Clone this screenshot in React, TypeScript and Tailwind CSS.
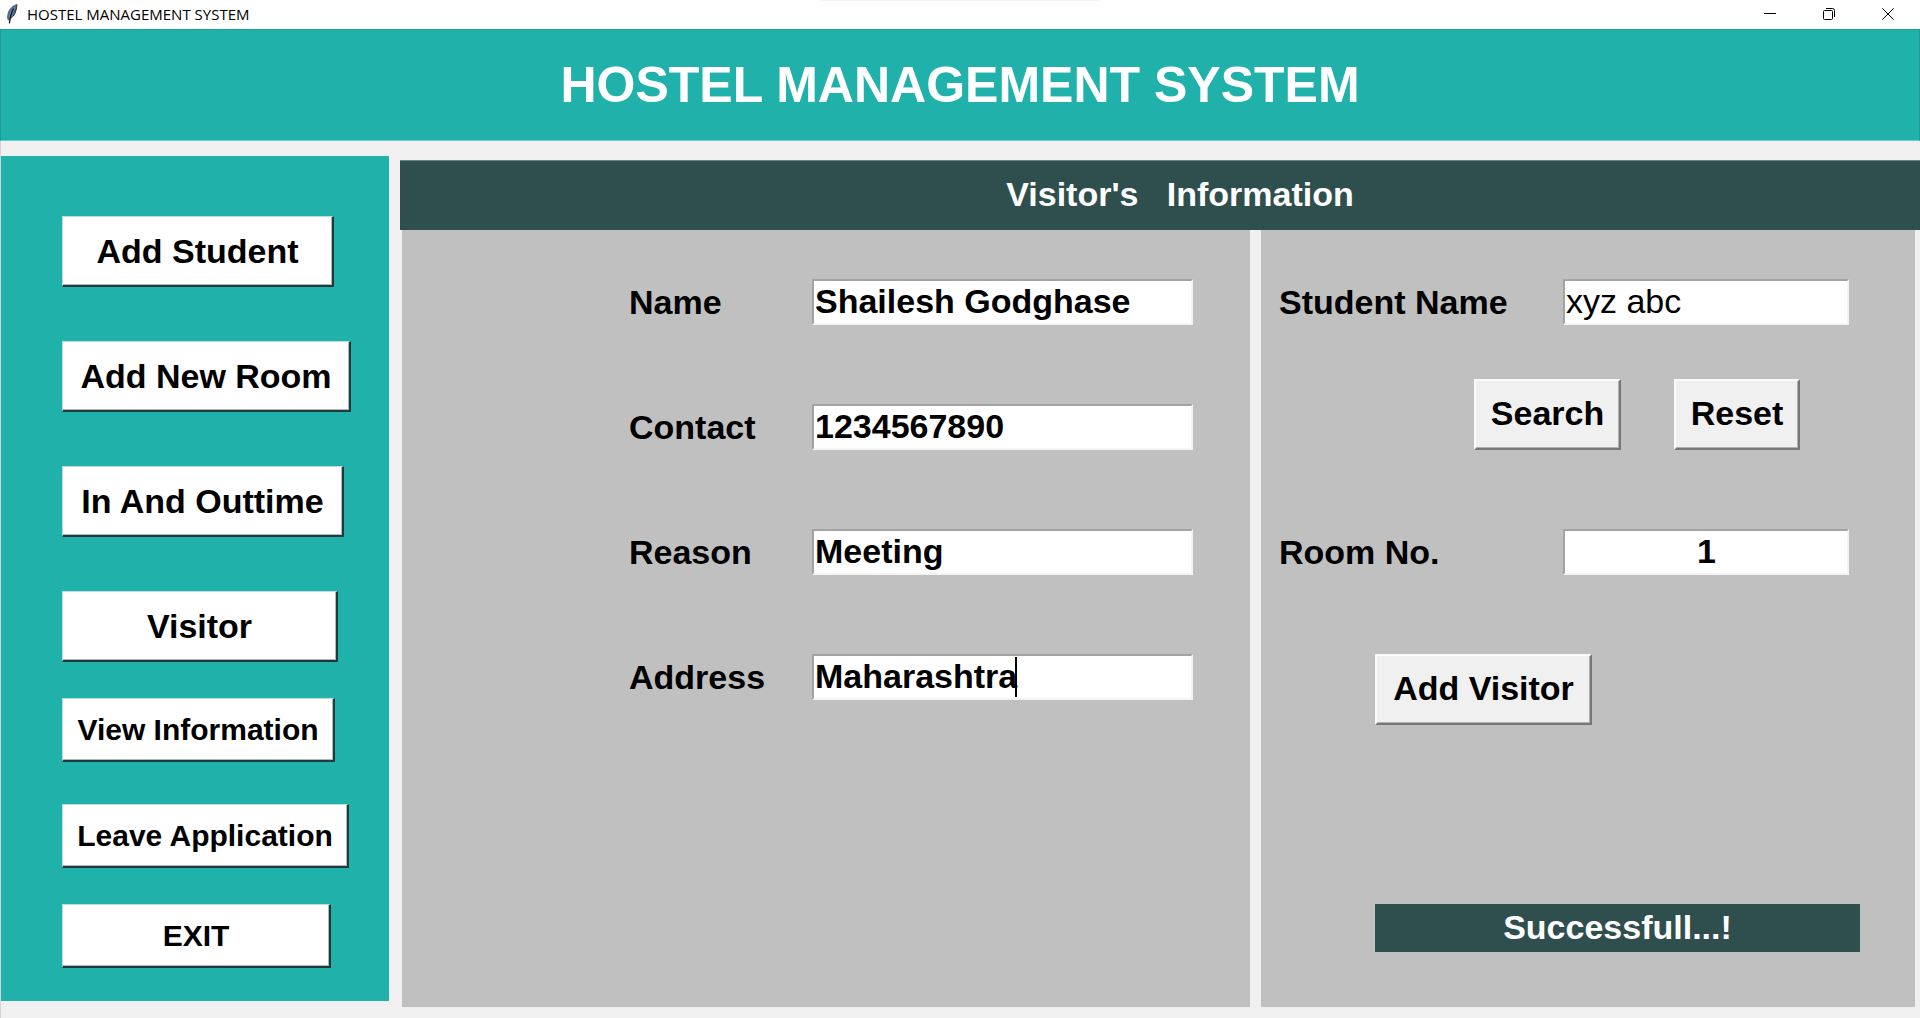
import type { ReactNode } from "react";

function Feather() {
  return (
    <svg viewBox="0 0 12 20" className="h-5 w-3" aria-hidden="true">
      <path d="M11 0.3C7.4 0.8 3 4.6 1.8 9C0.8 12 0.8 14.6 2.2 16.4C5.6 15.4 8.6 11.6 9.8 7.6C10.4 5.2 11.2 2.6 11 0.3Z" fill="#5d6672" />
      <path d="M9.4 2C6.8 3.6 4.4 6.6 3.4 9.8C2.8 12 2.6 13 3 14.4C5.4 12.8 7.4 9.8 8.2 6.8C8.8 5 9.4 3.6 9.4 2Z" fill="#4f8ad8" />
      <path d="M10.9 0.4C10.9 4 9.6 8.6 7.4 12" stroke="#2b2f38" strokeWidth="1" fill="none" />
      <path d="M7.6 4.6C5.6 8 4.2 12 3.4 19.4" stroke="#15181f" strokeWidth="1.3" fill="none" />
    </svg>
  );
}

function TitleBar() {
  return (
    <div className="relative flex h-[29px] items-center bg-white pb-px">
      <div className="absolute top-0 left-1/2 h-px w-[280px] -translate-x-1/2 bg-[#f3f3f3] shadow-[0_1px_6px_1px_rgba(0,0,0,0.05)]" />
      <div className="flex flex-1 items-center gap-[9px] pl-1.5">
        <Feather />
        <span className="font-['Open_Sans','Segoe_UI',sans-serif] text-[15px] leading-5 text-black">
          HOSTEL MANAGEMENT SYSTEM
        </span>
      </div>
      <div className="flex h-full pr-[3px]">
        <button type="button" aria-label="Minimize" className="flex w-[58px] items-center justify-center">
          <svg viewBox="0 0 12 12" className="h-3 w-3" stroke="#000" fill="none">
            <path d="M0 5.5H12" />
          </svg>
        </button>
        <button type="button" aria-label="Restore" className="flex w-[59px] items-center justify-center">
          <svg viewBox="0 0 12 12" className="h-3 w-3" stroke="#000" fill="none">
            <rect x="0.5" y="2.5" width="9" height="9" rx="1" />
            <path d="M3 0.5H9.5A2 2 0 0 1 11.5 2.5V9" />
          </svg>
        </button>
        <button type="button" aria-label="Close" className="flex w-[59px] items-center justify-center">
          <svg viewBox="0 0 12 12" className="h-3 w-3" stroke="#000" fill="none">
            <path d="M0.3 0.3L11.7 11.7M11.7 0.3L0.3 11.7" />
          </svg>
        </button>
      </div>
    </div>
  );
}

function MenuButton({ className, children }: { className: string; children: ReactNode }) {
  return (
    <button
      type="button"
      className={`border-t border-r-2 border-b-2 border-l border-t-[#b9dedc] border-r-[#1c3b3a] border-b-[#1c3b3a] border-l-[#b9dedc] bg-white text-center font-bold text-black shadow-[inset_-1px_-1px_0_#b5b5b5] ${className}`}
    >
      {children}
    </button>
  );
}

function PlainButton({ className, children }: { className: string; children: ReactNode }) {
  return (
    <button
      type="button"
      className={`h-[71px] border-2 border-t-[#fafafa] border-r-[#777777] border-b-[#777777] border-l-[#fafafa] bg-[#f0f0f0] pb-[3px] text-[34px] leading-10 font-bold text-black shadow-[inset_-1px_-1px_0_#b0b0b0] ${className}`}
    >
      {children}
    </button>
  );
}

type FieldProps = {
  id: string;
  label: string;
  value: string;
  labelClass: string;
  inputClass?: string;
  caret?: boolean;
};

function Field({ id, label, value, labelClass, inputClass = "font-bold", caret = false }: FieldProps) {
  return (
    <div className="flex h-[46px] items-center">
      <label htmlFor={id} className={`shrink-0 text-[34px] leading-10 font-bold text-black ${labelClass}`}>
        {label}
      </label>
      <div className="relative min-w-0 flex-1">
        <input
          id={id}
          defaultValue={value}
          className={`block h-[46px] w-full rounded-none border-2 border-t-[#a3a3a3] border-r-[#f4f4f4] border-b-[#f4f4f4] border-l-[#a3a3a3] bg-white pb-0.5 pl-px text-[34px] leading-10 text-black outline-none ${inputClass}`}
        />
        {caret && (
          <div className="pointer-events-none absolute inset-0 flex items-center pl-0.5" aria-hidden="true">
            <span className="h-10 w-[203px] border-r-2 border-black" />
          </div>
        )}
      </div>
    </div>
  );
}

export default function App() {
  return (
    <div className="flex min-h-screen flex-col bg-[#f0f0f0] font-['Liberation_Sans',Arial,sans-serif]">
      <TitleBar />
      <header className="flex h-28 items-center justify-center border-x border-t border-b border-[#1d9d97] border-b-[#6fcbc6] bg-[#20b2aa] pb-px">
        <h1 className="text-[50px] leading-[60px] font-bold text-white">HOSTEL MANAGEMENT SYSTEM</h1>
      </header>

      <div className="flex flex-1 border-l border-[#d4d4d4] pb-[11px]">
        <nav className="mt-[15px] mb-[6px] flex w-[388px] shrink-0 flex-col items-start bg-[#20b2aa] pt-[60px] pl-[61px]">
          <div className="flex flex-col items-start gap-[54px] text-[34px] leading-10">
            <MenuButton className="h-[71px] w-[272px] pb-px">Add Student</MenuButton>
            <MenuButton className="h-[71px] w-[289px] pb-px">Add New Room</MenuButton>
            <MenuButton className="h-[71px] w-[282px] pb-px">In And Outtime</MenuButton>
            <MenuButton className="h-[71px] w-[276px] pb-px">Visitor</MenuButton>
          </div>
          <div className="flex flex-col items-start pt-9 text-[30px] leading-9">
            <MenuButton className="h-16 w-[273px]">View Information</MenuButton>
            <MenuButton className="mt-[42px] h-16 w-[287px]">Leave Application</MenuButton>
            <MenuButton className="mt-9 h-16 w-[269px]">EXIT</MenuButton>
          </div>
        </nav>

        <main className="mt-[19px] ml-[11px] flex min-w-0 flex-1 flex-col">
          <h2 className="flex h-[70px] items-center justify-center border-t border-[#6d8585] bg-[#2f4f4f] pb-1 pl-10 text-[34px] leading-10 font-bold whitespace-pre text-white">
            {"Visitor's   Information"}
          </h2>
          <div className="grid flex-1 grid-cols-[minmax(0,848fr)_minmax(0,654fr)] gap-[11px] pr-[5px] pl-0.5">
            <section className="flex flex-col gap-[79px] bg-[#c0c0c0] pt-[49px] pr-[57px] pl-[227px]">
              <Field id="name" label="Name" value="Shailesh Godghase" labelClass="w-[183px]" />
              <Field id="contact" label="Contact" value="1234567890" labelClass="w-[183px]" />
              <Field id="reason" label="Reason" value="Meeting" labelClass="w-[183px]" />
              <Field id="address" label="Address" value="Maharashtra" labelClass="w-[183px]" caret />
            </section>
            <section className="flex flex-col bg-[#c0c0c0] pt-[49px] pr-[66px] pl-[18px]">
              <Field
                id="student"
                label="Student Name"
                value="xyz abc"
                labelClass="w-[284px]"
                inputClass="font-normal"
              />
              <div className="mt-[54px] flex justify-end gap-[53px] pr-[49px]">
                <PlainButton className="w-[147px]">Search</PlainButton>
                <PlainButton className="w-[126px]">Reset</PlainButton>
              </div>
              <div className="mt-[79px]">
                <Field
                  id="room"
                  label="Room No."
                  value="1"
                  labelClass="w-[284px]"
                  inputClass="text-center font-bold"
                />
              </div>
              <div className="mt-[79px] ml-24">
                <PlainButton className="w-[217px]">Add Visitor</PlainButton>
              </div>
              <output className="mt-[179px] mr-[-11px] ml-24 block h-12 bg-[#2f4f4f] pt-[3px] text-center text-[34px] leading-10 font-bold text-white">
                Successfull...!
              </output>
            </section>
          </div>
        </main>
      </div>
    </div>
  );
}
